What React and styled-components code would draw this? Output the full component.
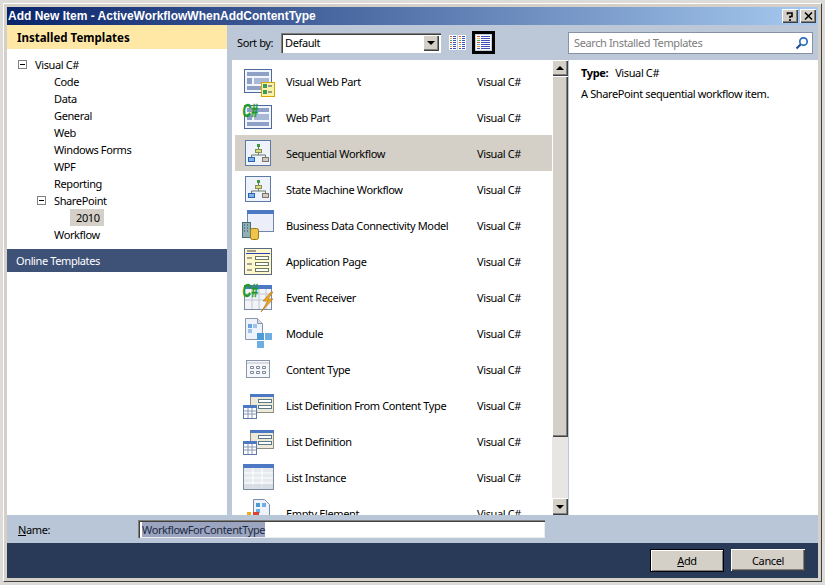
import React from 'react';
import styled, { createGlobalStyle } from 'styled-components';

const Global = createGlobalStyle`
  html, body { margin: 0; padding: 0; background: #dcdbd7; }
  body { font-family: "Noto Sans", "Liberation Sans", sans-serif; font-size: 11px; letter-spacing: -0.38px; color: #000; }
  * { box-sizing: border-box; }
`;

const Desktop = styled.div`
  width: 825px;
  height: 585px;
  padding: 3px;
  overflow: hidden;
`;

const Win = styled.div`
  width: 819px;
  height: 579px;
  background: #d4d0c8;
  border-top: 1px solid #fff;
  border-left: 1px solid #fff;
  border-right: 1px solid #404040;
  border-bottom: 1px solid #404040;
  display: flex;
  flex-direction: column;
  padding: 3px;
`;

const TitleBar = styled.div`
  height: 18px;
  flex: none;
  display: flex;
  align-items: center;
  justify-content: space-between;
  padding: 0 2px 0 1px;
  background: linear-gradient(90deg, #0a246a, #a6caf0);
  color: #fff;
  font-family: "Liberation Sans", sans-serif;
  font-weight: bold;
  font-size: 12px;
  letter-spacing: 0;
`;

const TitleButtons = styled.div`
  display: flex;
  gap: 2px;
`;

const raised = `
  background: #d4d0c8;
  box-shadow: inset 1px 1px 0 #fff, inset -1px -1px 0 #404040, inset -2px -2px 0 #808080;
`;

const CapButton = styled.div`
  ${raised}
  width: 16px;
  height: 14px;
  display: flex;
  align-items: center;
  justify-content: center;
  color: #000;
`;

const Body = styled.div`
  flex: 1;
  min-height: 0;
  display: flex;
`;

const Left = styled.div`
  width: 220px;
  flex: none;
  background: #fff;
  display: flex;
  flex-direction: column;
`;

const LeftHead = styled.div`
  height: 24px;
  flex: none;
  display: flex;
  align-items: center;
  padding-left: 10px;
  background: #ffe8a6;
  font-weight: bold;
  font-size: 11.5px;
  letter-spacing: 0;
`;

const Tree = styled.div`
  padding-top: 7px;
  height: 200px;
  flex: none;
`;

const TreeRow = styled.div`
  height: 17px;
  line-height: 17px;
  display: flex;
  align-items: center;
  padding-left: ${(p) => p.$indent}px;
  white-space: nowrap;
`;

const Expander = styled.span`
  width: 9px;
  height: 9px;
  margin-right: 8px;
  margin-left: -17px;
  border: 1px solid #808080;
  display: flex;
  align-items: center;
  justify-content: center;
  &::before {
    content: '';
    width: 5px;
    height: 1px;
    background: #000;
  }
`;

const TreeSelected = styled.span`
  background: #d4d0c8;
  padding: 0 4px 0 6px;
  margin-left: -6px;
`;

const OnlineBand = styled.div`
  height: 23px;
  flex: none;
  display: flex;
  align-items: center;
  padding-left: 9px;
  background: #3d5276;
  color: #fff;
`;

const Main = styled.div`
  flex: 1;
  min-width: 0;
  display: flex;
  flex-direction: column;
  background: #bcc7d8;
`;

const Toolbar = styled.div`
  height: 35px;
  flex: none;
  display: flex;
  align-items: center;
  padding: 0 5px 0 10px;
`;

const SortLabel = styled.span`
  width: 44px;
  flex: none;
`;

const Combo = styled.div`
  width: 160px;
  height: 20px;
  flex: none;
  background: #fff;
  box-shadow: inset 1px 1px 0 #808080, inset 2px 2px 0 #404040, inset -1px -1px 0 #fff;
  display: flex;
  align-items: center;
  justify-content: space-between;
  padding: 2px 2px 2px 4px;
`;

const ComboArrow = styled.div`
  ${raised}
  width: 16px;
  height: 16px;
  display: flex;
  align-items: center;
  justify-content: center;
`;

const Arrow = styled.span`
  width: 0;
  height: 0;
  border-left: 4px solid transparent;
  border-right: 4px solid transparent;
  ${(p) => (p.$up ? 'border-bottom: 4px solid #000;' : 'border-top: 4px solid #000;')}
`;

const ViewButton = styled.div`
  width: 23px;
  height: 23px;
  flex: none;
  display: flex;
  align-items: center;
  justify-content: center;
  margin-left: ${(p) => p.$gap}px;
  ${(p) => p.$active && 'border: 3px solid #000; background: #c3cddc;'}
`;

const Search = styled.div`
  width: 245px;
  height: 22px;
  margin-left: auto;
  background: #fff;
  border: 1px solid #8592a8;
  display: flex;
  align-items: center;
  justify-content: space-between;
  padding: 0 3px 0 5px;
  color: #7d7d7d;
`;

const Content = styled.div`
  flex: 1;
  min-height: 0;
  display: flex;
  padding-left: 5px;
`;

const List = styled.div`
  width: 320px;
  flex: none;
  background: #fff;
  padding: 3px 0 0 3px;
  overflow: hidden;
`;

const Row = styled.div`
  height: 36px;
  flex: none;
  display: flex;
  align-items: center;
  background: ${(p) => (p.$selected ? '#d4d0c8' : 'transparent')};
  white-space: nowrap;
`;

const IconSlot = styled.div`
  width: 51px;
  flex: none;
  padding-left: 5px;
  display: flex;
  align-items: center;
`;

const RowName = styled.span`
  width: 191px;
  flex: none;
`;

const Scrollbar = styled.div`
  width: 16px;
  flex: none;
  display: flex;
  flex-direction: column;
  background: #e8e6e2;
`;

const ScrollButton = styled.div`
  ${raised}
  height: ${(p) => p.$h}px;
  flex: none;
  display: flex;
  align-items: center;
  justify-content: center;
  ${(p) => p.$end && 'margin-top: auto;'}
`;

const Detail = styled.div`
  flex: 1;
  margin-left: 1px;
  background: #fff;
  padding: 5px 12px;
`;

const DetailType = styled.div`
  height: 15px;
  line-height: 15px;
  margin-bottom: 6px;
  display: flex;
  gap: 7px;
`;

const Strong = styled.strong`
  font-weight: bold;
`;

const NameRow = styled.div`
  height: 28px;
  flex: none;
  display: flex;
  align-items: center;
  padding-left: 11px;
  background: #b9c6d7;
`;

const NameLabel = styled.label`
  width: 120px;
  flex: none;
`;

const NameBox = styled.div`
  width: 407px;
  height: 18px;
  background: #fff;
  box-shadow: inset 1px 1px 0 #808080, inset 2px 2px 0 #404040, inset -1px -1px 0 #ececec;
  display: flex;
  align-items: center;
  padding-left: 4px;
`;

const Selection = styled.span`
  background: #9ba5c0;
  color: #202a40;
`;

const Footer = styled.div`
  height: 35px;
  flex: none;
  display: flex;
  align-items: flex-start;
  justify-content: flex-end;
  gap: 7px;
  padding: 6px 13px 0 0;
  background: #283a57;
`;

const PushButton = styled.div`
  ${raised}
  width: 74px;
  height: ${(p) => (p.$primary ? 23 : 22)}px;
  display: flex;
  align-items: center;
  justify-content: center;
  ${(p) => p.$primary && 'outline: 1px solid #000; outline-offset: -1px; box-shadow: inset 2px 2px 0 #fff, inset -2px -2px 0 #808080;'}
`;

const Key = styled.span`
  text-decoration: underline;
`;

const Sheet = ({ x = 4, y = 5, w = 28, h = 24 }) => (
  <>
    <rect x={x + 0.5} y={y + 0.5} width={w - 1} height={h - 1} fill="#f2f5fb" stroke="#4c6a9c" />
    <rect x={x + 3} y={y + 3} width={w - 6} height={4} fill="#8ea0c6" />
    <rect x={x + 3} y={y + 9} width={5} height={6} fill="#8ea0c6" />
    <rect x={x + 10} y={y + 9} width={w - 13} height={6} fill="#a9b8d6" />
    <rect x={x + 3} y={y + 17} width={w - 6} height={4} fill="#8ea0c6" />
  </>
);

const Sharp = () => (
  <text transform="translate(2.5 16.5) scale(1 1.5)" fontFamily="Liberation Sans" fontStyle="italic" fontWeight="bold" fontSize="12" letterSpacing="0" fill="#1f9a28" stroke="#1f9a28" strokeWidth="0.35">C#</text>
);

const FlowTile = () => (
  <>
    <rect x="5.5" y="4.5" width="25" height="25" fill="#eef2fa" stroke="#5d7aa6" />
    <rect x="17" y="8" width="3" height="3" fill="#3d9a3d" />
    <path d="M18.5 11v2M18.5 17v2M11.5 21v-2h14v2" stroke="#6a7a6a" fill="none" />
    <rect x="15.5" y="13.5" width="6" height="3" fill="#d6dc80" stroke="#8a8f50" />
    <rect x="8.5" y="21.5" width="6" height="4" fill="#7fb2ea" stroke="#2a66b0" />
    <rect x="22.5" y="21.5" width="6" height="4" fill="#cfcac0" stroke="#7a766c" />
  </>
);

const Window2 = ({ x, y, w, h }) => (
  <>
    <rect x={x + 0.5} y={y + 0.5} width={w - 1} height={h - 1} fill="#eceffa" stroke="#6f86ad" />
    <rect x={x} y={y} width={w} height={4} fill="#4c78c4" />
  </>
);

const ListForm = () => (
  <>
    <rect x="10.5" y="6.5" width="23" height="18" fill="#eee9d8" stroke="#8c8c80" />
    <rect x="10" y="6" width="24" height="3" fill="#4c78c4" />
    <rect x="18.5" y="11.5" width="13" height="3" fill="#fff" stroke="#5a7a8a" />
    <rect x="18.5" y="17.5" width="13" height="3" fill="#fff" stroke="#5a7a8a" />
    <rect x="3.5" y="17.5" width="13" height="13" fill="#fff" stroke="#5d7aa6" />
    <rect x="3" y="17" width="14" height="3" fill="#4c78c4" />
    <path d="M4 23h12M4 26h12M8 20v10M12 20v10" stroke="#8a9ab8" />
  </>
);

const ModuleTile = () => (
  <>
    <path d="M5.5 2.5h12l5 5v16h-17z" fill="#eef2fa" stroke="#8a96aa" />
    <path d="M17.5 2.5v5h5" fill="#d6dbe6" stroke="#8a96aa" />
    <rect x="8" y="8" width="4" height="4" fill="#6aa2dc" />
    <rect x="13" y="8" width="4" height="4" fill="#9cc4ea" />
    <rect x="8" y="13" width="4" height="4" fill="#9cc4ea" />
    <rect x="17" y="17" width="7" height="7" fill="#4c9ad8" />
    <rect x="25" y="17" width="7" height="7" fill="#6eaee0" />
    <rect x="17" y="25" width="7" height="7" fill="#6eaee0" />
  </>
);

const icons = {
  webpart: (
    <>
      <Sheet />
      <rect x="21.5" y="18.5" width="13" height="14" fill="#f6f2a8" stroke="#d9a400" />
      <rect x="23" y="20" width="4" height="4" fill="#3c9a5c" />
      <rect x="23" y="26" width="4" height="4" fill="#3c9a5c" />
      <path d="M28 22h4M28 28h4" stroke="#445" />
    </>
  ),
  part: (
    <>
      <Sheet />
      <Sharp />
    </>
  ),
  flow: <FlowTile />,
  bdc: (
    <>
      <Window2 x={7} y={2} w={27} h={22} />
      <rect x="2.5" y="14.5" width="8" height="15" fill="#8fb0b4" stroke="#4a6a74" />
      <path d="M4 17h1M7 17h1M4 20h1M7 20h1M4 23h1M7 23h1" stroke="#2a4a54" />
      <rect x="10.5" y="20.5" width="8" height="11" rx="2" fill="#eec44a" stroke="#9a7a10" />
    </>
  ),
  page: (
    <>
      <rect x="4.5" y="4.5" width="27" height="26" fill="#fff8cc" stroke="#5a6a80" />
      <path d="M7 7h9" stroke="#444" />
      <path d="M6 9.5h24" stroke="#2b3fb0" />
      <path d="M7 14h5M7 20h5M7 26h5" stroke="#555" />
      <rect x="15.5" y="12.5" width="13" height="3" fill="#fff" stroke="#6a7a5a" />
      <rect x="15.5" y="18.5" width="13" height="3" fill="#fff" stroke="#6a7a5a" />
      <rect x="15.5" y="24.5" width="13" height="3" fill="#fff" stroke="#6a7a5a" />
    </>
  ),
  event: (
    <>
      <rect x="4.5" y="5.5" width="27" height="24" fill="#f2f4f8" stroke="#7a8aa0" />
      <rect x="4" y="5" width="28" height="4" fill="#4c78c4" />
      <path d="M5 14h26M5 20h26M12 9v20M19 9v20M26 9v20" stroke="#c0c8d4" />
      <path d="M31 12l-8 9h5l-7 11 12-13h-5l5-7z" fill="#f0a820" stroke="#a86a10" strokeWidth="0.6" />
      <Sharp />
    </>
  ),
  module: <ModuleTile />,
  content: (
    <>
      <rect x="6.5" y="8.5" width="23" height="17" fill="#f6f7fa" stroke="#8a96aa" />
      <path d="M7 11h22" stroke="#b8c0cc" />
      <path d="M10.5 14.5h3v2h-3zM16.5 14.5h3v2h-3zM22.5 14.5h3v2h-3zM10.5 19.5h3v2h-3zM16.5 19.5h3v2h-3zM22.5 19.5h3v2h-3z" fill="#fff" stroke="#7a869a" />
    </>
  ),
  listdef: <ListForm />,
  instance: (
    <>
      <rect x="3.5" y="4.5" width="30" height="25" fill="#e6e9ee" stroke="#7a8aa0" />
      <rect x="3" y="4" width="31" height="4" fill="#4c78c4" />
      <path d="M4 13h29M4 18h29M4 23h29M13 8v21M22 8v21" stroke="#fff" />
      <path d="M4 24h29v5H4z" fill="#c8d0dc" opacity="0.5" />
    </>
  ),
  empty: (
    <>
      <path d="M13.5 3.5h11l5 5v22h-16z" fill="#eef2fa" stroke="#7a8aa8" />
      <rect x="16" y="7" width="4" height="4" fill="#4c9ad8" />
      <rect x="22" y="7" width="4" height="4" fill="#6eaee0" />
      <rect x="16" y="13" width="4" height="4" fill="#6eaee0" />
      <rect x="7" y="16" width="4" height="4" fill="#f0a820" />
      <rect x="13" y="16" width="6" height="5" fill="#e04030" />
    </>
  ),
};

const templates = [
  ['Visual Web Part', 'webpart'],
  ['Web Part', 'part'],
  ['Sequential Workflow', 'flow', true],
  ['State Machine Workflow', 'flow'],
  ['Business Data Connectivity Model', 'bdc'],
  ['Application Page', 'page'],
  ['Event Receiver', 'event'],
  ['Module', 'module'],
  ['Content Type', 'content'],
  ['List Definition From Content Type', 'listdef'],
  ['List Definition', 'listdef'],
  ['List Instance', 'instance'],
  ['Empty Element', 'empty'],
];

const treeItems = ['Code', 'Data', 'General', 'Web', 'Windows Forms', 'WPF', 'Reporting'];

const dotColours = ['#d85040', '#e0c040', '#50a860', '#d85040', '#60b0d0', '#e0a040', '#4050c0'];
const rows = [0, 1, 2, 3, 4, 5, 6];

const TileCard = ({ x }) => (
  <g>
    <rect x={x} y="0" width="8" height="15" fill="#fff" />
    {rows.map((r) => (
      <g key={r}>
        <rect x={x + 1} y={1 + r * 2} width="2" height="1" fill={dotColours[r]} />
        <rect x={x + 4} y={1 + r * 2} width="3" height="1" fill="#4050b8" />
      </g>
    ))}
  </g>
);

const TileView = () => (
  <svg width="17" height="15">
    <TileCard x={0} />
    <TileCard x={9} />
  </svg>
);

const ListView = () => (
  <svg width="15" height="15">
    <rect x="0" y="0" width="15" height="15" fill="#fff" />
    {rows.map((r) => (
      <g key={r}>
        <rect x="1" y={1 + r * 2} width="3" height="1" fill={dotColours[r]} />
        <rect x="5" y={1 + r * 2} width="9" height="1" fill="#4050b8" />
      </g>
    ))}
  </svg>
);

const App = () => (
  <>
    <Global />
    <Desktop>
      <Win>
        <TitleBar>
          <span>Add New Item - ActiveWorkflowWhenAddContentType</span>
          <TitleButtons>
            <CapButton>
              <svg width="8" height="9" viewBox="0 0 8 9">
                <path d="M1.5 2.5V1h4.5v3.5H4v1.5M4 7v2" fill="none" stroke="#000" strokeWidth="1.6" />
              </svg>
            </CapButton>
            <CapButton>
              <svg width="9" height="8" viewBox="0 0 9 8">
                <path d="M1 0.5L8 7.5M8 0.5L1 7.5" stroke="#000" strokeWidth="1.5" />
              </svg>
            </CapButton>
          </TitleButtons>
        </TitleBar>
        <Body>
          <Left>
            <LeftHead>Installed Templates</LeftHead>
            <Tree>
              <TreeRow $indent={28}><Expander />Visual C#</TreeRow>
              {treeItems.map((t) => (
                <TreeRow key={t} $indent={47}>{t}</TreeRow>
              ))}
              <TreeRow $indent={47}><Expander />SharePoint</TreeRow>
              <TreeRow $indent={69}><TreeSelected>2010</TreeSelected></TreeRow>
              <TreeRow $indent={47}>Workflow</TreeRow>
            </Tree>
            <OnlineBand>Online Templates</OnlineBand>
          </Left>
          <Main>
            <Toolbar>
              <SortLabel>Sort by:</SortLabel>
              <Combo>
                Default
                <ComboArrow><Arrow /></ComboArrow>
              </Combo>
              <ViewButton $gap={5}><TileView /></ViewButton>
              <ViewButton $gap={3} $active><ListView /></ViewButton>
              <Search>
                Search Installed Templates
                <svg width="14" height="14" viewBox="0 0 14 14">
                  <circle cx="8.5" cy="5.5" r="3.7" fill="none" stroke="#2a6cc0" strokeWidth="1.7" />
                  <path d="M5.5 8.5L1.5 12.5" stroke="#1f4f90" strokeWidth="2.2" />
                </svg>
              </Search>
            </Toolbar>
            <Content>
              <List>
                {templates.map(([name, icon, selected]) => (
                  <Row key={name} $selected={selected}>
                    <IconSlot>
                      <svg width="36" height="34" viewBox="0 0 36 34">{icons[icon]}</svg>
                    </IconSlot>
                    <RowName>{name}</RowName>
                    <span>Visual C#</span>
                  </Row>
                ))}
              </List>
              <Scrollbar>
                <ScrollButton $h={16}><Arrow $up /></ScrollButton>
                <ScrollButton $h={361} />
                <ScrollButton $h={17} $end><Arrow /></ScrollButton>
              </Scrollbar>
              <Detail>
                <DetailType><Strong>Type:</Strong> Visual C#</DetailType>
                A SharePoint sequential workflow item.
              </Detail>
            </Content>
          </Main>
        </Body>
        <NameRow>
          <NameLabel><Key>N</Key>ame:</NameLabel>
          <NameBox><Selection>WorkflowForContentType</Selection></NameBox>
        </NameRow>
        <Footer>
          <PushButton $primary><span><Key>A</Key>dd</span></PushButton>
          <PushButton>Cancel</PushButton>
        </Footer>
      </Win>
    </Desktop>
  </>
);

export default App;
